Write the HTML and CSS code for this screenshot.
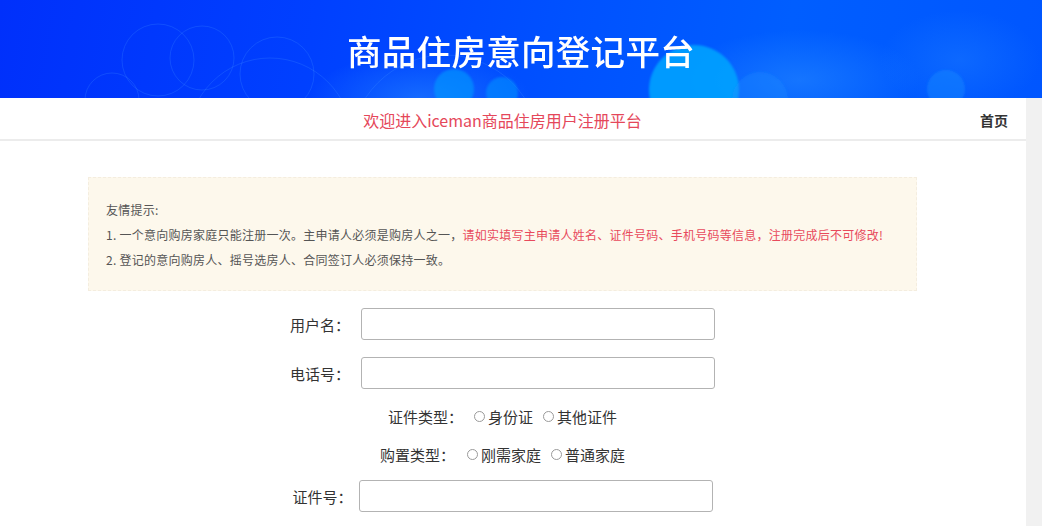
FILE: index.html
```html
<!DOCTYPE html>
<html lang="zh-CN">
<head>
<meta charset="utf-8">
<title>商品住房意向登记平台</title>
<link rel="stylesheet" href="styles.css">
</head>
<body>
<header class="banner">
  <svg class="banner-decor" viewBox="0 0 1042 98" width="1042" height="98" aria-hidden="true">
    <defs>
      <radialGradient id="glow" cx="50%" cy="50%" r="50%">
        <stop offset="0%" stop-color="#2a8cff" stop-opacity="0.5"/>
        <stop offset="100%" stop-color="#2a8cff" stop-opacity="0"/>
      </radialGradient>
      <filter id="soft"><feGaussianBlur stdDeviation="1.2"/></filter>
    </defs>
    <ellipse cx="420" cy="98" rx="110" ry="45" fill="url(#glow)"/>
    <ellipse cx="800" cy="80" rx="120" ry="50" fill="url(#glow)"/>
    <ellipse cx="960" cy="60" rx="80" ry="50" fill="url(#glow)" opacity="0.6"/>
    <g fill="none" stroke="#4a9cff" stroke-opacity="0.22" stroke-width="1">
      <circle cx="158" cy="60" r="36"/>
      <circle cx="202" cy="58" r="32"/>
      <circle cx="277" cy="74" r="37"/>
      <circle cx="112" cy="100" r="27"/>
      <circle cx="270" cy="140" r="82"/>
      <circle cx="445" cy="150" r="95"/>
    </g>
    <g filter="url(#soft)">
      <circle cx="694" cy="90" r="45" fill="#00a6ff" opacity="0.85"/>
      <circle cx="454" cy="89" r="20" fill="#0a9cff" opacity="0.6"/>
      <circle cx="502" cy="93" r="16" fill="#0a9cff" opacity="0.5"/>
      <circle cx="946" cy="89" r="19" fill="#1a8cff" opacity="0.45"/>
      <circle cx="760" cy="100" r="28" fill="#1a8cff" opacity="0.35"/>
    </g>
  </svg>
  <h1 class="banner-title">商品住房意向登记平台</h1>
</header>
<div class="page">
  <main class="main">
    <nav class="topnav">
      <span></span>
      <p class="welcome">欢迎进入iceman商品住房用户注册平台</p>
      <a class="home-link" href="#">首页</a>
    </nav>
    <section class="content">
      <div class="notice">
        <p>友情提示:</p>
        <p>1. 一个意向购房家庭只能注册一次。主申请人必须是购房人之一，<span class="warn">请如实填写主申请人姓名、证件号码、手机号码等信息，注册完成后不可修改!</span></p>
        <p>2. 登记的意向购房人、摇号选房人、合同签订人必须保持一致。</p>
      </div>
      <form class="form">
        <div class="row row-first">
          <label class="lbl" for="user">用户名：</label>
          <input class="field" id="user" type="text">
        </div>
        <div class="row row-second">
          <label class="lbl" for="tel">电话号：</label>
          <input class="field" id="tel" type="text">
        </div>
        <div class="row row-radio row-idtype">
          <span class="lbl">证件类型：</span>
          <div class="opts">
            <label class="opt"><span class="dot"></span>身份证</label>
            <label class="opt"><span class="dot"></span>其他证件</label>
          </div>
        </div>
        <div class="row row-radio row-buytype">
          <span class="lbl">购置类型：</span>
          <div class="opts opts-wide">
            <label class="opt"><span class="dot"></span>刚需家庭</label>
            <label class="opt"><span class="dot"></span>普通家庭</label>
          </div>
        </div>
        <div class="row row-idno">
          <label class="lbl" for="idno">证件号：</label>
          <input class="field field-tight" id="idno" type="text">
        </div>
      </form>
    </section>
  </main>
  <aside class="rail"></aside>
</div>
</body>
</html>
```

FILE: styles.css
```css
* { box-sizing: border-box; }
html, body { margin: 0; padding: 0; }
body {
  width: 1042px;
  height: 526px;
  overflow: hidden;
  font-family: "Noto Sans CJK SC", "Noto Sans", sans-serif;
  color: #333;
  background: #fff;
}
p { margin: 0; }

.banner {
  position: relative;
  height: 98px;
  overflow: hidden;
  display: flex;
  align-items: center;
  justify-content: center;
  background: linear-gradient(100deg, #0030fb 0%, #0040ff 30%, #0052ff 55%, #005eff 75%, #0056ff 100%);
}
.banner-decor {
  position: absolute;
  left: 0;
  top: 0;
}
.banner-title {
  position: relative;
  margin: 0;
  font-size: 34.5px;
  font-weight: 500;
  color: #fff;
  letter-spacing: 0.3px;
  line-height: 1;
  padding-top: 2px;
}

.page {
  display: flex;
  height: 428px;
}
.main {
  flex: 1;
  background: #fff;
}
.rail {
  width: 16px;
  background: #f1f1f1;
}

.topnav {
  display: grid;
  grid-template-columns: 88px 829px 1fr;
  align-items: center;
  height: 43px;
  border-bottom: 2px solid #ececec;
}
.welcome {
  text-align: center;
  font-size: 16px;
  color: #e5475a;
  padding-top: 2px;
}
.home-link {
  justify-self: end;
  margin-right: 18px;
  font-size: 14px;
  font-weight: 700;
  color: #333;
  text-decoration: none;
  padding-top: 3px;
}

.content {
  margin-left: 88px;
  width: 829px;
  padding-top: 36px;
}
.notice {
  background: #fdf8ec;
  border: 1px dashed #f4eddf;
  padding: 19px 17px 18px;
  font-size: 12px;
  line-height: 25px;
  letter-spacing: 0.25px;
  color: #555;
}
.warn { color: #e84a5c; }

.form {
  display: flex;
  flex-direction: column;
  align-items: center;
  padding-top: 17px;
  font-size: 15px;
  color: #333;
}
.row {
  display: flex;
  align-items: center;
  height: 32px;
}
.row-second { margin-top: 17px; }
.row-idtype { margin-top: 12px; height: 30px; }
.row-buytype { margin-top: 8px; height: 30px; }
.row-idno { margin-top: 11px; }

.lbl { white-space: nowrap; }
.field {
  width: 354px;
  height: 32px;
  margin-left: 11px;
  border: 1px solid #b3b3b3;
  border-radius: 3px;
  background: #fff;
  font: inherit;
  padding: 0 6px;
}
.field-tight { margin-left: 6px; }

.opts {
  display: flex;
  gap: 10px;
  margin-left: 11px;
}
.opts-wide { margin-left: 12px; }
.opt {
  display: flex;
  align-items: center;
  white-space: nowrap;
}
.dot {
  width: 11px;
  height: 11px;
  border: 1px solid #9a9a9a;
  border-radius: 50%;
  margin-right: 3px;
  background: #fff;
}
```
